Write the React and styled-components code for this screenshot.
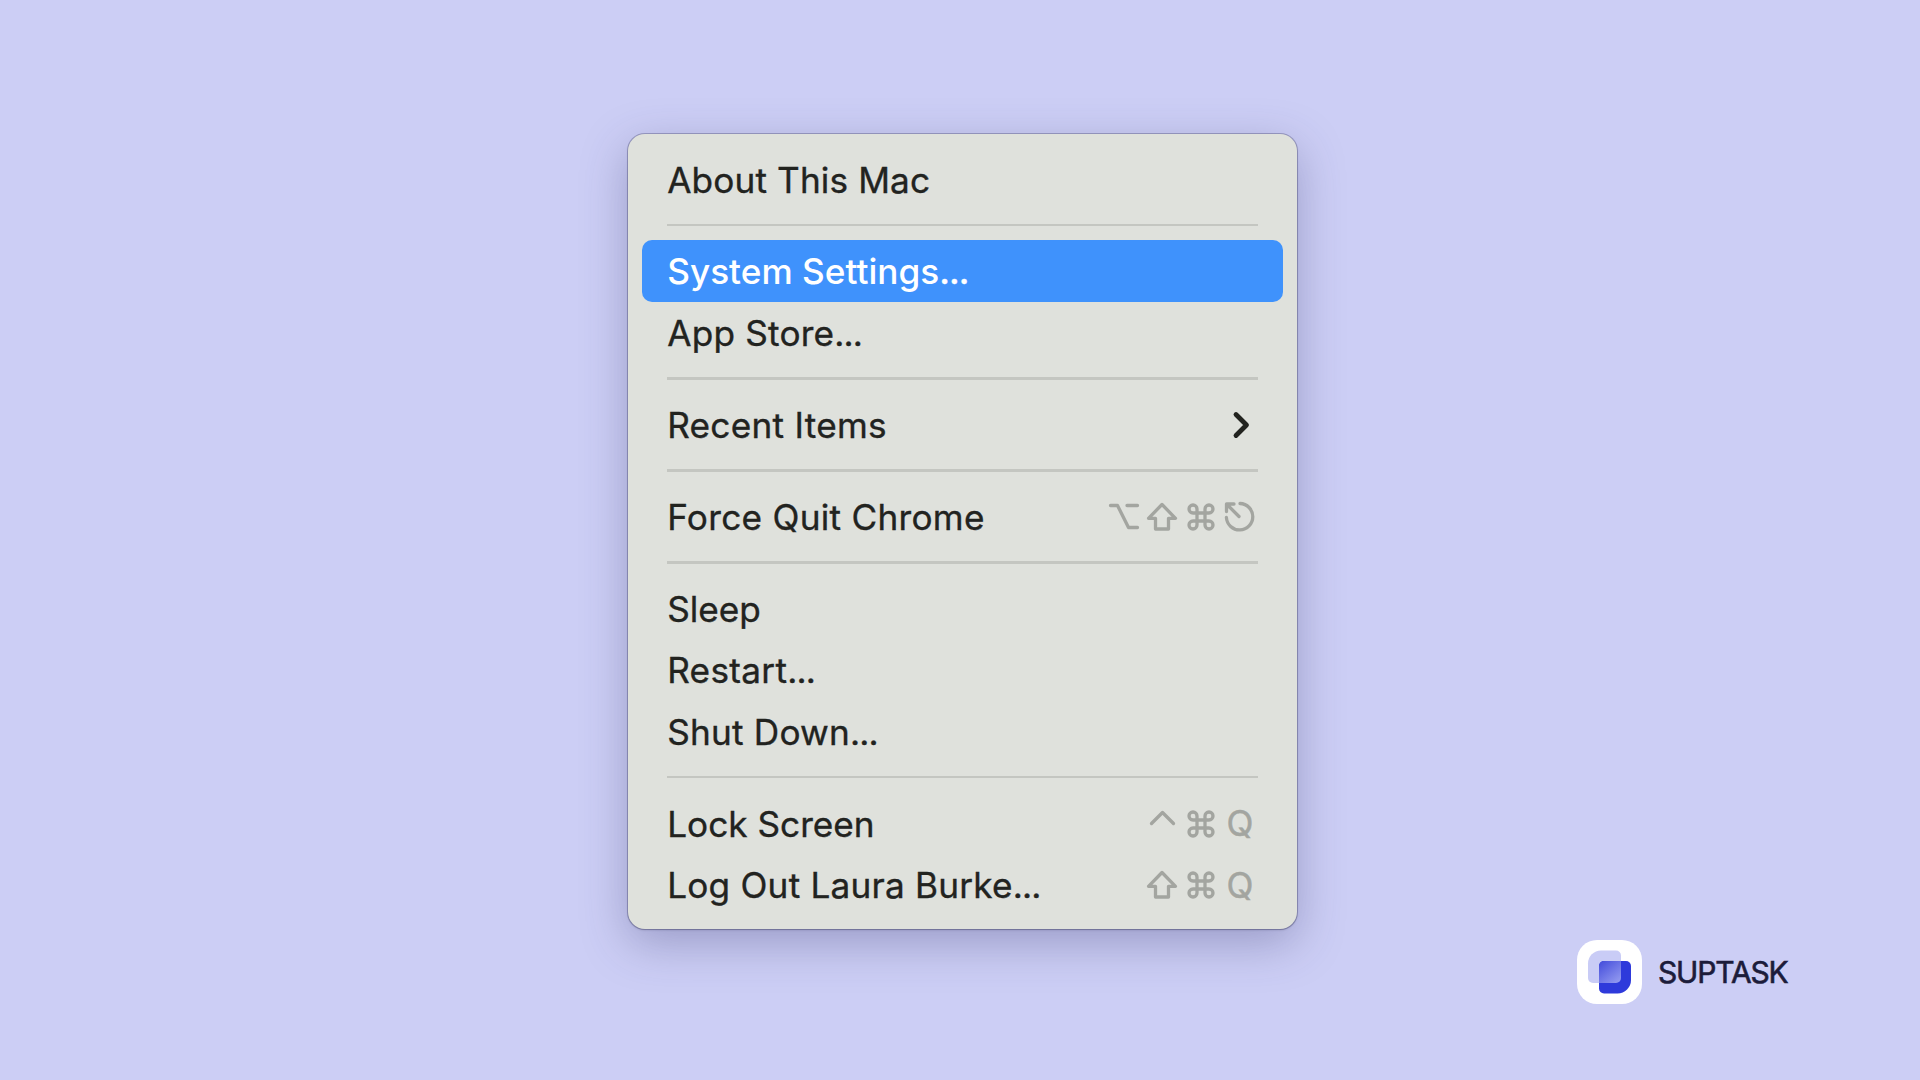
import React from "react";
import styled, { createGlobalStyle } from "styled-components";

const GlobalStyle = createGlobalStyle`
  * {
    box-sizing: border-box;
  }

  body {
    margin: 0;
    background: #cccef5;
    font-family: Inter, "Liberation Sans", sans-serif;
  }
`;

//full page that holds the menu and the brand
const Page = styled.main`
  width: 100vw;
  height: 100vh;
  min-height: 1080px;
  display: grid;
  grid-template-columns: 627.6px 669.8px 1fr;
  grid-template-rows: auto 1fr;
  padding-top: 134.3px;
  align-items: start;
  overflow: hidden;
`;

//styled component for the menu panel
const Menu = styled.ul`
  grid-column: 2;
  list-style: none;
  margin: 0;
  padding: 14px;
  height: 794.7px;
  border-radius: 17px;
  background: #dfe1dc;
  box-shadow: 0 0 0 1px rgba(70, 70, 110, 0.36),
    0 1px 2px rgba(50, 50, 80, 0.3), 0 14px 46px rgba(60, 60, 110, 0.34);
`;

//styled component for one line of the menu
const Item = styled.li`
  display: flex;
  align-items: center;
  justify-content: space-between;
  height: 61.35px;
  padding: 0 24.2px 0 25.6px;
  border-radius: 10px;
  color: ${props => (props.$active ? "#ffffff" : "#22231f")};
  background: ${props => (props.$active ? "#3f92fc" : "transparent")};
`;

const Label = styled.span`
  padding-top: ${props => (props.$heavy ? 1.6 : 2.4)}px;
  font-size: 35.2px;
  line-height: 59px;
  white-space: pre;
  font-weight: ${props => (props.$heavy ? 500 : 400)};
  letter-spacing: ${props => props.$spacing}px;
  -webkit-text-stroke: ${props => (props.$heavy ? 0 : 0.35)}px currentColor;
`;

const Dots = styled.span`
  letter-spacing: -0.9px;
  -webkit-text-stroke: 0.4px currentColor;
`;

const Separator = styled.li`
  height: 30.7px;
  padding: 14.2px 25.2px 0;

  &::after {
    content: "";
    display: block;
    height: 2.4px;
    background: #c4c6c1;
  }
`;

//styled component for the keyboard shortcut on the right side
const Shortcut = styled.span`
  display: flex;
  align-items: center;
  padding-top: 1.4px;
  color: #a3a5a0;
`;

const Key = styled.span`
  width: 38.7px;
  height: 59px;
  display: flex;
  align-items: center;
  justify-content: center;
  font-size: 35.2px;
  line-height: 59px;
  -webkit-text-stroke: 0.5px currentColor;
`;

const Glyph = styled.svg`
  display: block;
  width: 38px;
  height: 38px;
  fill: none;
  stroke: currentColor;
  stroke-width: 3.3;
  stroke-linecap: round;
  stroke-linejoin: round;
`;

const Arrow = styled(Glyph)`
  color: #22231f;
  stroke-width: 4.8;
`;

//styled component for the brand in the corner
const Brand = styled.div`
  grid-column: 3;
  grid-row: 2;
  justify-self: end;
  width: 343px;
  margin-top: 11px;
  height: 64px;
  display: flex;
  align-items: center;
  gap: 16px;
`;

const BrandMark = styled.svg`
  width: 65px;
  height: 64px;
  flex: none;
`;

const BrandName = styled.span`
  padding-top: 1px;
  font-size: 30px;
  font-weight: 400;
  line-height: 64px;
  letter-spacing: -1.15px;
  color: #1c1c3a;
  -webkit-text-stroke: 0.6px currentColor;
`;

const glyphs = {
  option: <path d="M5.5 7.5H12.5L23.5 29.5H32.5M22 7.5H32.5" />,
  shift: <path d="M19 6.5L32.5 20.3H25.5V31H12.5V20.3H5.5Z" />,
  command: (
    <path d="M15 15H23V23H15ZM15 15H11A4 4 0 1 1 15 11ZM23 15V11A4 4 0 1 1 27 15ZM23 23H27A4 4 0 1 1 23 27ZM15 23V27A4 4 0 1 1 11 23Z" />
  ),
  escape: (
    <path d="M19 5.5A13.2 13.2 0 1 1 5.4 19.5M18 18.5L7 7.5M5.5 13.5V6H13" />
  ),
  control: <path d="M8.5 18.5L19.5 7.5L30.5 18.5" />
};

const rows = [
  { label: "About This Mac", spacing: 0.12 },
  null,
  { label: "System Settings", dots: true, spacing: 0, active: true },
  { label: "App Store", dots: true, spacing: 0.2 },
  null,
  { label: "Recent Items", spacing: 0.27, arrow: true },
  null,
  {
    label: "Force Quit Chrome",
    spacing: 0.27,
    keys: ["option", "shift", "command", "escape"]
  },
  null,
  { label: "Sleep", spacing: 0 },
  { label: "Restart", dots: true, spacing: 0.3 },
  { label: "Shut Down", dots: true, spacing: 0.2 },
  null,
  { label: "Lock Screen", spacing: 0, keys: ["control", "command", "Q"] },
  {
    label: "Log Out Laura Burke",
    dots: true,
    spacing: 0.21,
    keys: ["shift", "command", "Q"]
  }
];

const Keys = ({ keys }) => (
  <Shortcut>
    {keys.map(key => (
      <Key key={key}>
        {glyphs[key] ? <Glyph viewBox="0 0 38 38">{glyphs[key]}</Glyph> : key}
      </Key>
    ))}
  </Shortcut>
);

const Logo = () => (
  <BrandMark viewBox="0 0 65 64">
    <defs>
      <linearGradient id="overlap" x1="0.1" y1="0" x2="0.9" y2="1">
        <stop offset="0" stopColor="#464fdc" />
        <stop offset="1" stopColor="#949bf0" />
      </linearGradient>
    </defs>
    <rect width="65" height="64" rx="20" fill="#ffffff" />
    <path
      d="M24 10.5H39A5 5 0 0 1 44 15.5V38A5 5 0 0 1 39 43H16A5 5 0 0 1 11 38V23.5A13 13 0 0 1 24 10.5Z"
      fill="#c9ccf6"
    />
    <path
      d="M27 21H49A5 5 0 0 1 54 26V40A13.5 13.5 0 0 1 40.5 53.5H27A5 5 0 0 1 22 48.5V26A5 5 0 0 1 27 21Z"
      fill="#2e3adb"
    />
    <path
      d="M27 21H44V38A5 5 0 0 1 39 43H22V26A5 5 0 0 1 27 21Z"
      fill="url(#overlap)"
    />
  </BrandMark>
);

const App = () => (
  <>
    <GlobalStyle />
    <Page>
      <Menu>
        {rows.map((row, i) =>
          row ? (
            <Item key={i} $active={row.active}>
              <Label $spacing={row.spacing} $heavy={row.active}>
                {row.label}
                {row.dots && <Dots>...</Dots>}
              </Label>
              {row.keys && <Keys keys={row.keys} />}
              {row.arrow && (
                <Shortcut>
                  <Key>
                    <Arrow viewBox="0 0 38 38">
                      <path d="M15 8.5L25.5 19L15 29.5" />
                    </Arrow>
                  </Key>
                </Shortcut>
              )}
            </Item>
          ) : (
            <Separator key={i} />
          )
        )}
      </Menu>
      <Brand>
        <Logo />
        <BrandName>SUPTASK</BrandName>
      </Brand>
    </Page>
  </>
);

export default App;
